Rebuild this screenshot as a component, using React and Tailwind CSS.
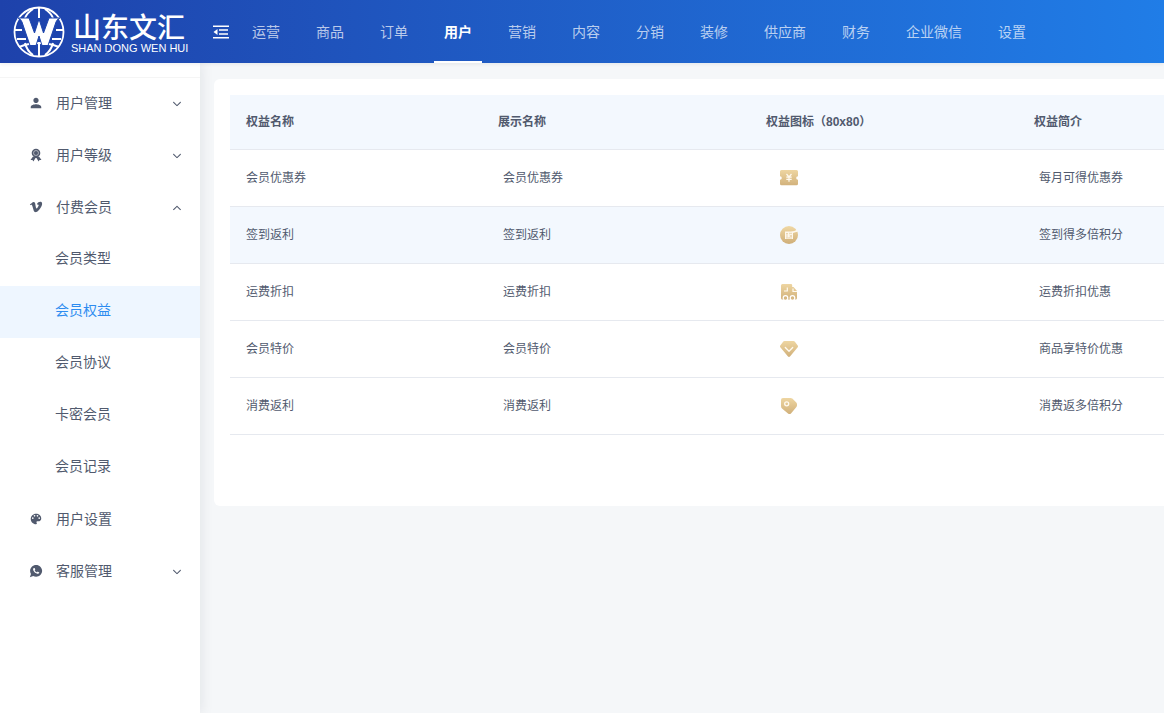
import { useState } from 'react'
import { IoMdPerson, IoLogoVimeo, IoMdColorPalette, IoLogoWhatsapp, IoIosArrowDown, IoIosArrowUp } from 'react-icons/io'

const NAV_ITEMS = ['运营', '商品', '订单', '用户', '营销', '内容', '分销', '装修', '供应商', '财务', '企业微信', '设置']

const MENU = [
    { name: '用户管理', icon: IoMdPerson, children: [] },
    { name: '用户等级', icon: RibbonIcon, children: [] },
    {
        name: '付费会员',
        icon: IoLogoVimeo,
        children: ['会员类型', '会员权益', '会员协议', '卡密会员', '会员记录'],
    },
    { name: '用户设置', icon: IoMdColorPalette },
    { name: '客服管理', icon: IoLogoWhatsapp, children: [] },
]

const RIGHTS = [
    { name: '会员优惠券', icon: CouponIcon, intro: '每月可得优惠券' },
    { name: '签到返利', icon: SignIcon, intro: '签到得多倍积分' },
    { name: '运费折扣', icon: TruckIcon, intro: '运费折扣优惠' },
    { name: '会员特价', icon: DiamondIcon, intro: '商品享特价优惠' },
    { name: '消费返利', icon: TagIcon, intro: '消费返多倍积分' },
]

function RibbonIcon({ className }) {
    return (
        <svg viewBox="0 0 14 14" className={className} fill="currentColor" aria-hidden="true">
            <path d="M4 8.500 1.500 12l2-.1.900 1.600L6.500 10h1l2.100 3.500.900-1.600 2 .1L10 8.500z" />
            <circle cx="7" cy="5" r="4.300" />
            <circle cx="7" cy="5" r="2.500" fill="none" stroke="#fff" strokeWidth=".5" />
        </svg>
    )
}

// Gold badge, every benefit icon is drawn inside it
function GoldIcon({ id, label, children }) {
    return (
        <svg viewBox="0 0 18 18" className="w-[18px] h-[18px]" role="img" aria-label={label}>
            <defs>
                <linearGradient id={id} x1="0" y1="0" x2="0" y2="18" gradientUnits="userSpaceOnUse">
                    <stop offset="0" stopColor="#f0d8a4" />
                    <stop offset="1" stopColor="#cfae78" />
                </linearGradient>
            </defs>
            {children}
        </svg>
    )
}

function CouponIcon() {
    return (
        <GoldIcon id="gold-coupon" label="优惠券">
            <path fill="url(#gold-coupon)" d="M1.500 1h15A1.500 1.500 0 0 1 18 2.500v4.700a1.800 1.800 0 0 0 0 3.600v4a1.500 1.500 0 0 1-1.500 1.500h-15A1.500 1.500 0 0 1 0 14.800v-4a1.800 1.800 0 0 0 0-3.600V2.500A1.500 1.500 0 0 1 1.500 1z" />
            <path fill="none" stroke="#fffaf0" strokeWidth="1.200" d="M6.500 5 9 8l2.500-3M6.300 8.200h5.400M6.300 10.300h5.400M9 8v4.800" />
        </GoldIcon>
    )
}

function SignIcon() {
    return (
        <GoldIcon id="gold-sign" label="签到">
            <circle cx="9" cy="9" r="9" fill="url(#gold-sign)" />
            <path fill="#fdf8ee" d="M5 5.500h6q3.500-.2 6-1.800l.8 2q-2.500.3-4.800 1.300v6H5z" />
            <path fill="none" stroke="#e2c795" strokeWidth=".7" d="M6 7.500h2M9 7.300h3M9.500 9l2.500 2M12 9l-2.500 2M7 8v3.500M6 12h6" />
        </GoldIcon>
    )
}

function TruckIcon() {
    return (
        <GoldIcon id="gold-truck" label="运费">
            <path fill="url(#gold-truck)" d="M2.500 1H11q1.200 0 1.200 1.200V4h1.300l3.500 4v7q0 1.500-1.500 1.500h-13Q1 16.500 1 15V2.500Q1 1 2.500 1z" />
            <path fill="none" stroke="#fffaf0" strokeWidth="1.200" d="M7.300 4.500V8H4M13 5.500v3h4" />
            <g fill="#d6b782" stroke="#fff" strokeWidth="1.200">
                <circle cx="5.500" cy="15" r="2.300" />
                <circle cx="12.500" cy="15" r="2.300" />
            </g>
        </GoldIcon>
    )
}

function DiamondIcon() {
    return (
        <GoldIcon id="gold-diamond" label="特价">
            <path fill="url(#gold-diamond)" d="M4.500 1h9q.7 0 1.200.6l3 4q.7 1-.2 1.900l-7.300 8.800q-1.200 1.200-2.400 0L.5 7.500Q-.4 6.600.3 5.600l3-4Q3.800 1 4.500 1z" />
            <path fill="none" stroke="#fffaf0" strokeWidth="1.300" strokeLinecap="round" strokeLinejoin="round" d="M5.300 7.500 9 11.300l3.700-3.800" />
        </GoldIcon>
    )
}

function TagIcon() {
    return (
        <GoldIcon id="gold-tag" label="返利">
            <path fill="url(#gold-tag)" d="M3 1h7.500q1 0 1.800.6l4 4q1 1.200.7 2.900-.2 1.300-1.200 2.300l-4.600 5.400q-1.600 1.600-3.200.2L2 11.500q-1-1-1-2.500V3q0-2 2-2z" />
            <circle cx="6.700" cy="6.800" r="2" fill="none" stroke="#fffaf0" strokeWidth="1.300" />
        </GoldIcon>
    )
}

function Logo() {
    return (
        <a href="#home" className="flex items-center gap-1.5 w-[200px] pl-[13px] text-white shrink-0">
            <svg viewBox="0 0 52 52" className="w-[52px] h-[52px] shrink-0" aria-hidden="true">
                <g fill="none" stroke="#fff" strokeWidth="2">
                    <circle cx="26" cy="26" r="24.500" strokeWidth="1.800" />
                    <path d="M26 2v10M26 36v14M20 3q-6 4-8 9M32 3q6 4 8 9M12 37q2 8 8 12M40 37q-2 8-8 12" />
                    <path d="M2 24h7M43 24h7M4 33h9M39 33h9M6 41q20-8 40 0" />
                </g>
                <path
                    fill="#fff"
                    stroke="#1e46ae"
                    strokeWidth="1"
                    d="M5 12h11l5.500 15L26 13l4.500 14L36 12h11q-3 1-4 4l-8 23.500h-6L26 30l-3 9.500h-6L9 16q-1-3-4-4z"
                />
            </svg>
            <span className="flex flex-col pt-1 whitespace-nowrap">
                <span className="pl-0.5 text-[28px] leading-7 font-medium">山东文汇</span>
                <span className="text-[11px] leading-[10px]">SHAN DONG WEN HUI</span>
            </span>
        </a>
    )
}

function Header({ active, onSelect }) {
    return (
        <header className="relative z-10 flex items-center h-[63px] bg-linear-to-r from-[#1e42ab] to-[#207de7] shadow-[0_1px_4px_rgba(0,21,41,0.08)]">
            <Logo />
            <button type="button" aria-label="收起菜单" className="w-[42px] pl-[13px] shrink-0 text-white">
                <svg viewBox="0 0 16 14" className="w-4 h-3.5" fill="none" stroke="currentColor" strokeWidth="1.600">
                    <path d="M0 1.300h16M6 5h9M6 9h9M0 12.700h16" />
                    <path d="M4.500 4v6L.5 7z" fill="currentColor" stroke="none" />
                </svg>
            </button>
            <nav className="flex gap-4 self-stretch">
                {NAV_ITEMS.map((item) => (
                    <button
                        key={item}
                        type="button"
                        onClick={() => onSelect(item)}
                        className={`px-2.5 pt-0.5 border-b-2 text-sm whitespace-nowrap ${item === active ? 'border-white text-white font-bold' : 'border-transparent text-white/70'}`}
                    >
                        {item}
                    </button>
                ))}
            </nav>
        </header>
    )
}

function Sidebar({ active, onSelect }) {
    const [opened, setOpened] = useState('付费会员')

    return (
        <aside className="w-[200px] shrink-0 bg-white pt-3.5 shadow-[2px_0_12px_rgba(0,21,41,0.08)]">
            <ul className="border-t border-[#f5f5f5]">
                {MENU.map(({ name, icon: Icon, children }) => {
                    const isOpen = opened === name
                    const Arrow = isOpen ? IoIosArrowUp : IoIosArrowDown

                    return (
                        <li key={name}>
                            <button
                                type="button"
                                onClick={() => setOpened(isOpen ? '' : name)}
                                className="flex items-center w-full h-[52px] pl-[29px] pr-[17px] pb-0.5 text-sm text-[#515a6e]"
                            >
                                <Icon className="w-3.5 h-3.5 mr-[13px]" />
                                <span>{name}</span>
                                {children && <Arrow className="w-3 h-3 mt-0.5 ml-auto" />}
                            </button>
                            {isOpen && children && (
                                <ul>
                                    {children.map((child) => (
                                        <li key={child}>
                                            <a
                                                href="#menu"
                                                onClick={() => onSelect(child)}
                                                className={`flex items-center h-[52px] pl-[55px] pb-1 text-sm ${child === active ? 'bg-[#eef6ff] text-[#2d8cf0]' : 'text-[#515a6e]'}`}
                                            >
                                                {child}
                                            </a>
                                        </li>
                                    ))}
                                </ul>
                            )}
                        </li>
                    )
                })}
            </ul>
        </aside>
    )
}

function RightsTable() {
    return (
        <table className="w-full table-fixed text-left text-xs text-[#515a6e] whitespace-nowrap">
            <thead>
                <tr className="h-[54px] bg-[#f3f8fe] border-b border-[#e6e9ef]">
                    <th className="w-[252px] pl-4">权益名称</th>
                    <th className="w-[268px] pl-4">展示名称</th>
                    <th className="w-[268px] pl-4">权益图标（80x80）</th>
                    <th className="pl-4">权益简介</th>
                </tr>
            </thead>
            <tbody>
                {RIGHTS.map(({ name, icon: Icon, intro }) => (
                    <tr key={name} className={`h-[57px] border-b border-[#e6e9ef] ${name === '签到返利' ? 'bg-[#f3f8fe]' : ''}`}>
                        <td className="pl-4">{name}</td>
                        <td className="pl-[21px]">{name}</td>
                        <td className="pl-[30px]"><Icon /></td>
                        <td className="pl-[21px]">{intro}</td>
                    </tr>
                ))}
            </tbody>
        </table>
    )
}

export default function App() {
    const [section, setSection] = useState('用户')
    const [page, setPage] = useState('会员权益')

    return (
        <div className="flex flex-col min-h-screen bg-[#f5f7f9] font-['Liberation_Sans','Noto_Sans_CJK_SC',sans-serif]">
            <Header active={section} onSelect={setSection} />
            <div className="flex flex-1">
                <Sidebar active={page} onSelect={setPage} />
                <main className="flex-1 min-w-0 pt-4 pl-3.5">
                    <section className="pt-4 pl-4 pb-[71px] bg-white rounded-l-md">
                        <RightsTable />
                    </section>
                </main>
            </div>
        </div>
    )
}
